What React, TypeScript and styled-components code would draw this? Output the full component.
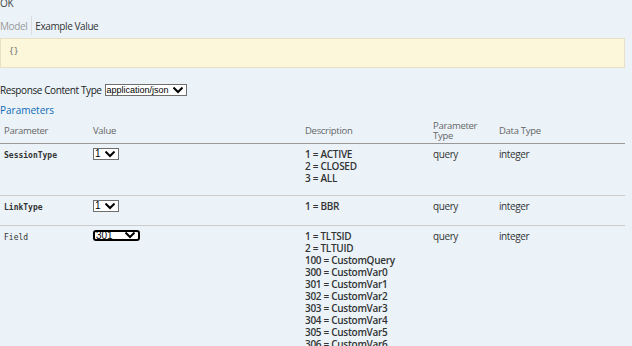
import React from "react";
import styled, { createGlobalStyle } from "styled-components";

const GlobalStyle = createGlobalStyle`
  html, body {
    margin: 0;
    padding: 0;
    background: #ebf3f9;
  }
  body {
    font-family: "Open Sans", "Noto Sans", "Liberation Sans", sans-serif;
    font-size: 10px;
    color: #333;
    overflow: hidden;
  }
`;

const Page = styled.div`
  width: 625px;
  margin-top: -4px;
`;

const StatusText = styled.div`
  font-size: 10px;
  line-height: 14px;
  letter-spacing: -0.3px;
  color: #444;
`;

const Tabs = styled.div`
  display: flex;
  align-items: center;
  height: 19px;
  margin-top: 6px;
`;

const Tab = styled.span<{ $active?: boolean }>`
  font-size: 10px;
  line-height: 14px;
  letter-spacing: -0.4px;
  color: ${(p) => (p.$active ? "#333" : "#999")};
  padding: ${(p) => (p.$active ? "0 0 0 3px" : "0 4px 0 0")};
`;

const TabDivider = styled.span`
  width: 1px;
  align-self: stretch;
  background: #dcdcdc;
`;

const Snippet = styled.pre`
  margin: 3px 0 0;
  box-sizing: border-box;
  height: 30px;
  padding: 5px 8px 7px;
  background: #fcf6db;
  border: 1px solid #e5e0c6;
  font-family: "DejaVu Sans Mono", "Liberation Mono", monospace;
  font-size: 8px;
  line-height: 16px;
  color: #666;
`;

const ContentTypeRow = styled.div`
  display: flex;
  align-items: center;
  gap: 3px;
  margin-top: 15px;
  height: 14px;
  font-size: 10px;
  letter-spacing: -0.4px;
  color: #222;
`;

const SelectBox = styled.span<{ $w: number; $size: number; $focused?: boolean }>`
  display: inline-flex;
  align-items: center;
  justify-content: space-between;
  box-sizing: border-box;
  width: ${(p) => p.$w}px;
  height: ${(p) => (p.$focused ? 11 : 12)}px;
  padding: 0 3px 0 1px;
  background: #fff;
  border: ${(p) => (p.$focused ? "2px solid #000" : "1px solid #6f6f6f")};
  border-radius: ${(p) => (p.$focused ? "3px" : "0")};
  font-family: "Liberation Sans", Arial, sans-serif;
  font-size: ${(p) => p.$size}px;
  letter-spacing: 0;
  line-height: 10px;
  color: #000;
`;

const SelectValue = styled.span`
  white-space: nowrap;
`;

const Chevron = styled.svg`
  flex: none;
  width: 10px;
  height: 7px;
`;

const SectionTitle = styled.h4`
  margin: 6px 0 0;
  font-size: 10px;
  font-weight: 400;
  line-height: 14px;
  color: #0f6ab4;
`;

const ParamTable = styled.table`
  width: 625px;
  table-layout: fixed;
  border-collapse: collapse;
  border-spacing: 0;
`;

const HeadCell = styled.th<{ $first?: boolean }>`
  padding: 4px 5px 2px ${(p) => (p.$first ? 4 : 5)}px;
  text-align: left;
  vertical-align: middle;
  font-weight: 400;
  font-size: 9.5px;
  line-height: 10px;
  letter-spacing: -0.3px;
  color: #666;
  border-bottom: 1px solid #999;
`;

const Row = styled.tr``;

const Cell = styled.td<{ $first?: boolean }>`
  padding: 4px 5px 11px ${(p) => (p.$first ? 4 : 5)}px;
  vertical-align: top;
  font-size: 10px;
  line-height: 12px;
  letter-spacing: -0.4px;
  color: #333;
  border-bottom: 1px solid #ccc;
`;

const ParamName = styled.span<{ $required?: boolean }>`
  font-family: "DejaVu Sans Mono", "Liberation Mono", monospace;
  font-size: 8px;
  letter-spacing: 0;
  font-weight: ${(p) => (p.$required ? 700 : 400)};
  color: #333;
`;

const ValueWrap = styled.div`
  display: flex;
  height: 12px;
`;

const DescLine = styled.div`
  font-weight: 600;
  color: #333;
  letter-spacing: -0.3px;
`;

const ChevronIcon = () => (
  <Chevron viewBox="0 0 10 7">
    <path d="M1.2 1.3 L5 5 L8.8 1.3" fill="none" stroke="#000" strokeWidth="2.1" strokeLinecap="square" />
  </Chevron>
);

type Param = {
  name: string;
  required: boolean;
  value: string;
  width: number;
  focused?: boolean;
  desc: string[];
};

const params: Param[] = [
  {
    name: "SessionType",
    required: true,
    value: "1",
    width: 26,
    desc: ["1 = ACTIVE", "2 = CLOSED", "3 = ALL"],
  },
  { name: "LinkType", required: true, value: "1", width: 26, desc: ["1 = BBR"] },
  {
    name: "Field",
    required: false,
    value: "301",
    width: 47,
    focused: true,
    desc: [
      "1 = TLTSID",
      "2 = TLTUID",
      "100 = CustomQuery",
      "300 = CustomVar0",
      "301 = CustomVar1",
      "302 = CustomVar2",
      "303 = CustomVar3",
      "304 = CustomVar4",
      "305 = CustomVar5",
      "306 = CustomVar6",
      "307 = CustomVar7",
    ],
  },
];

export default function App() {
  return (
    <>
      <GlobalStyle />
      <Page>
        <StatusText>OK</StatusText>
        <Tabs>
          <Tab>Model</Tab>
          <TabDivider />
          <Tab $active>Example Value</Tab>
        </Tabs>
        <Snippet>{"{}"}</Snippet>
        <ContentTypeRow>
          <span>Response Content Type</span>
          <SelectBox $w={82} $size={9}>
            <SelectValue>application/json</SelectValue>
            <ChevronIcon />
          </SelectBox>
        </ContentTypeRow>
        <SectionTitle>Parameters</SectionTitle>
        <ParamTable>
          <colgroup>
            <col style={{ width: 88 }} />
            <col style={{ width: 212 }} />
            <col style={{ width: 128 }} />
            <col style={{ width: 66 }} />
            <col style={{ width: 131 }} />
          </colgroup>
          <thead>
            <tr>
              <HeadCell $first>Parameter</HeadCell>
              <HeadCell>Value</HeadCell>
              <HeadCell>Description</HeadCell>
              <HeadCell>Parameter Type</HeadCell>
              <HeadCell>Data Type</HeadCell>
            </tr>
          </thead>
          <tbody>
            {params.map((p) => (
              <Row key={p.name}>
                <Cell $first>
                  <ParamName $required={p.required}>{p.name}</ParamName>
                </Cell>
                <Cell>
                  <ValueWrap>
                    <SelectBox $w={p.width} $size={10} $focused={p.focused}>
                      <SelectValue>{p.value}</SelectValue>
                      <ChevronIcon />
                    </SelectBox>
                  </ValueWrap>
                </Cell>
                <Cell>
                  {p.desc.map((d) => (
                    <DescLine key={d}>{d}</DescLine>
                  ))}
                </Cell>
                <Cell>query</Cell>
                <Cell>integer</Cell>
              </Row>
            ))}
          </tbody>
        </ParamTable>
      </Page>
    </>
  );
}
